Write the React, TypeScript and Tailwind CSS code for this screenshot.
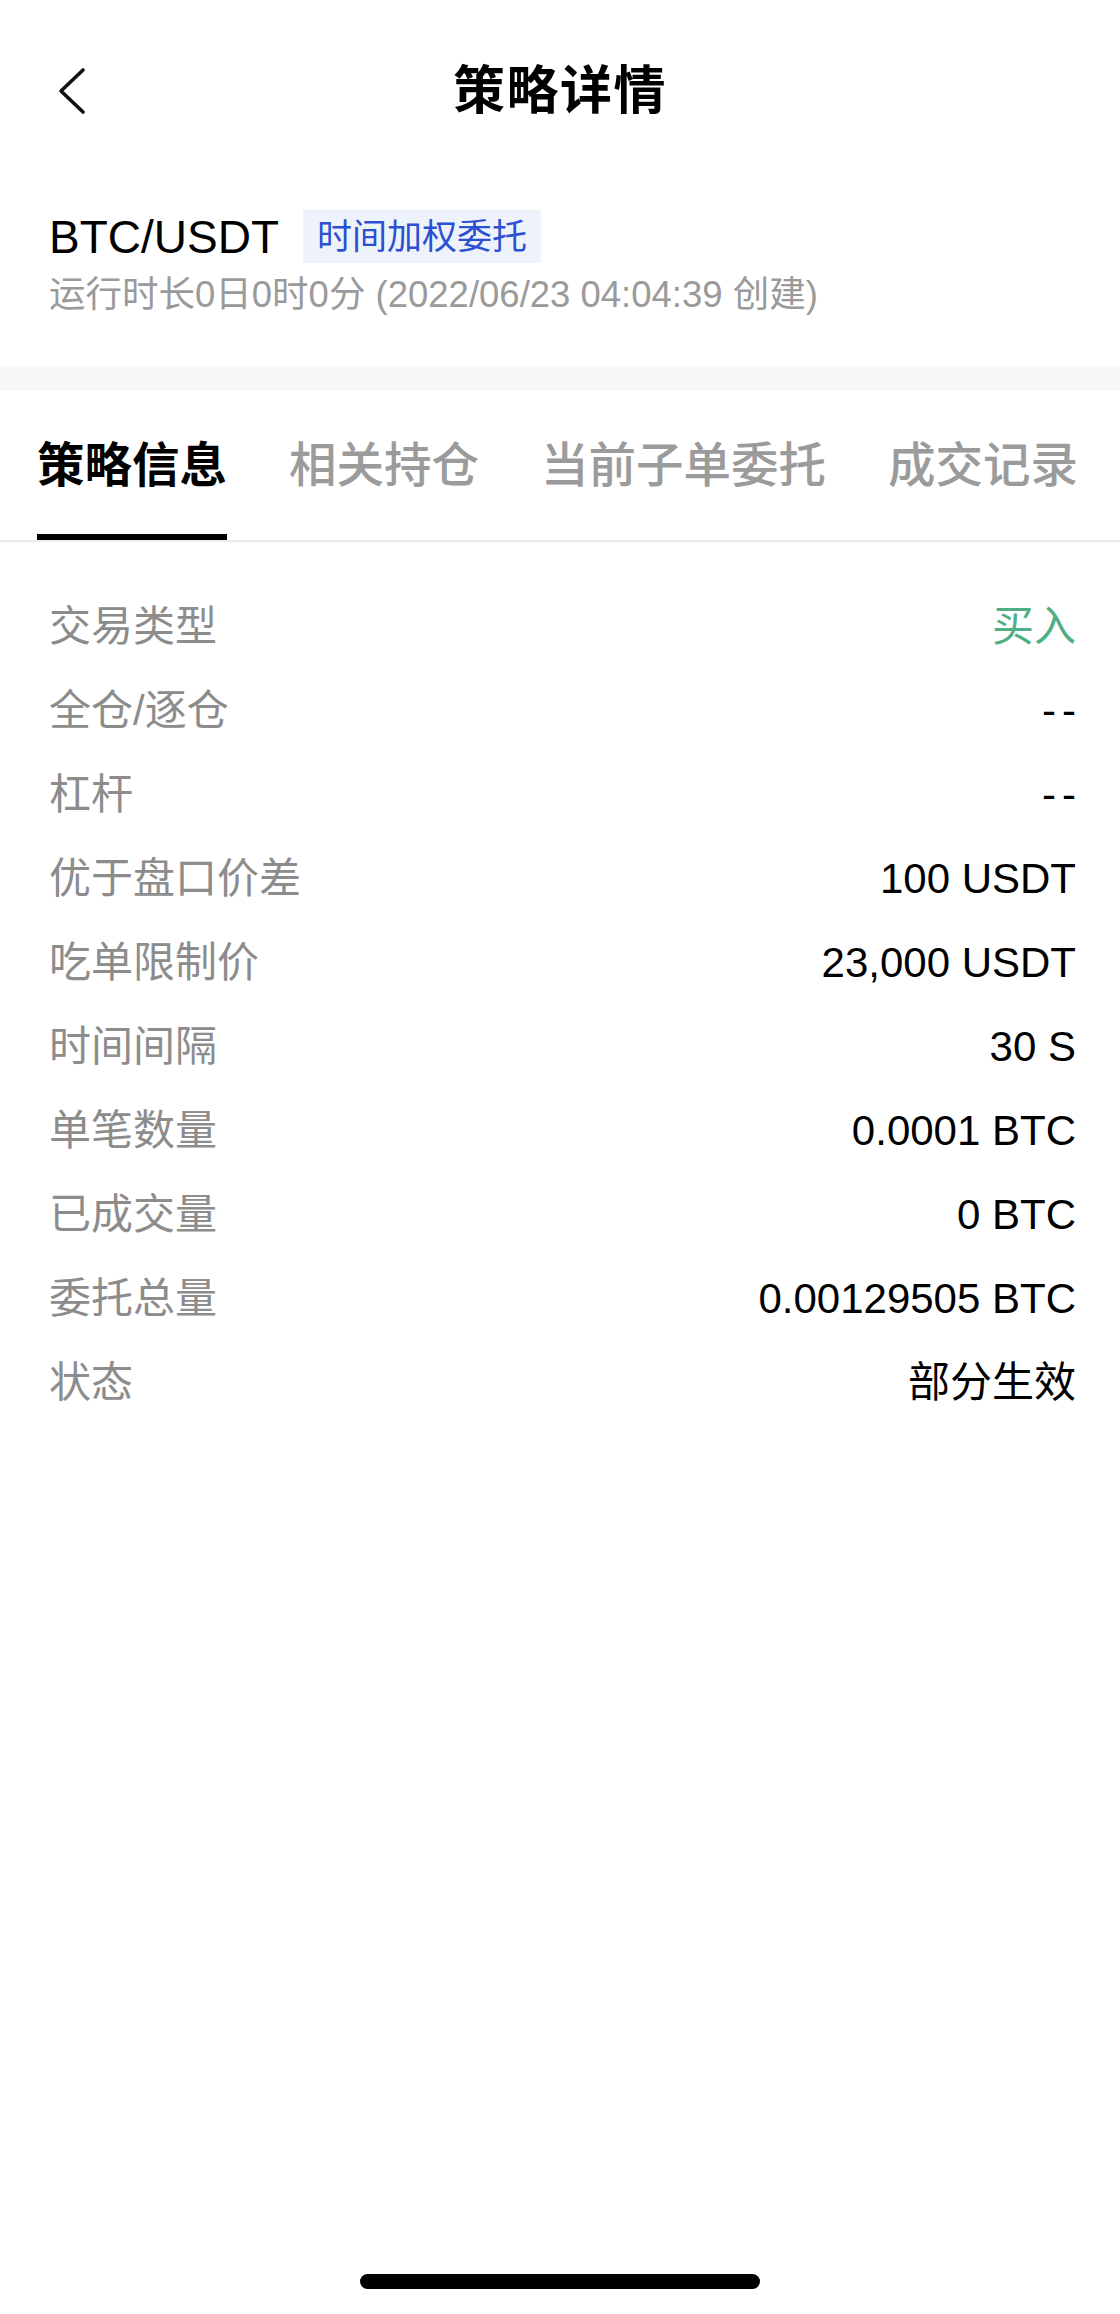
import React, { useState } from 'react';

const FONT = { fontFamily: '"Liberation Sans", "Noto Sans CJK SC", sans-serif' };

interface InfoRow {
  label: string;
  value: string;
  green?: boolean;
}

const rows: InfoRow[] = [
  { label: '交易类型', value: '买入', green: true },
  { label: '全仓/逐仓', value: '--' },
  { label: '杠杆', value: '--' },
  { label: '优于盘口价差', value: '100 USDT' },
  { label: '吃单限制价', value: '23,000 USDT' },
  { label: '时间间隔', value: '30 S' },
  { label: '单笔数量', value: '0.0001 BTC' },
  { label: '已成交量', value: '0 BTC' },
  { label: '委托总量', value: '0.00129505 BTC' },
  { label: '状态', value: '部分生效' },
];

const tabs = ['策略信息', '相关持仓', '当前子单委托', '成交记录'];

const App: React.FC = () => {
  const [activeTab, setActiveTab] = useState(0);

  return (
    <div className="w-full min-h-[2314px] bg-white flex flex-col text-black" style={FONT}>
      {/* Nav bar */}
      <div className="grid grid-cols-[1fr_auto_1fr] items-center h-[96px] mt-[43px]">
        <div className="pl-[58px] flex items-center">
          <svg width="28" height="48" viewBox="0 0 28 48" fill="none">
            <polyline points="25,3 3,24 25,45" stroke="#111" strokeWidth="3.6" strokeLinecap="round" strokeLinejoin="round" />
          </svg>
        </div>
        <h1 className="text-[52px] leading-none font-bold tracking-[1.5px]">策略详情</h1>
        <div />
      </div>

      {/* Pair info */}
      <div className="px-[49px] mt-[71px]">
        <div className="flex items-center gap-[24px]">
          <span className="text-[46px] leading-none">BTC/USDT</span>
          <span className="h-[53px] px-[14px] flex items-center bg-[#eef2fa] text-[#2b50d2] text-[35px] leading-none">
            时间加权委托
          </span>
        </div>
        <p className="mt-[10px] text-[36.5px] leading-[44px] text-[#9a9a9a] whitespace-nowrap">
          运行时长0日0时0分 (2022/06/23 04:04:39 创建)
        </p>
      </div>

      <div className="h-[25px] bg-[#f7f7f7] mt-[49px]" />

      {/* Tabs */}
      <div className="flex gap-[62px] px-[37px] border-b-2 border-[#ebebeb]">
        {tabs.map((tab, i) => (
          <button
            key={tab}
            onClick={() => setActiveTab(i)}
            className="flex flex-col items-stretch pt-[45px]"
          >
            <span
              className={`text-[47.5px] leading-[60px] whitespace-nowrap ${
                activeTab === i ? 'text-black font-bold' : 'text-[#9b9b9b] font-medium'
              }`}
            >
              {tab}
            </span>
            <span className={`mt-[38px] h-[6px] ${activeTab === i ? 'bg-black' : 'bg-transparent'}`} />
          </button>
        ))}
      </div>

      {/* Strategy info rows */}
      <div className="pt-[43px] pl-[49px] pr-[44px]">
        {rows.map((row) => (
          <div key={row.label} className="h-[84px] flex items-center justify-between text-[42px] leading-none">
            <span className="text-[#8c8c8c]">{row.label}</span>
            <span
              className={`${row.green ? 'text-[#4fae86]' : 'text-black'} ${
                row.value === '--' ? 'tracking-[6px] -mr-[6px]' : ''
              }`}
            >
              {row.value}
            </span>
          </div>
        ))}
      </div>

      {/* Home indicator */}
      <div className="mt-auto pb-[25px] flex justify-center">
        <div className="w-[400px] h-[15px] rounded-full bg-black" />
      </div>
    </div>
  );
};

export default App;
